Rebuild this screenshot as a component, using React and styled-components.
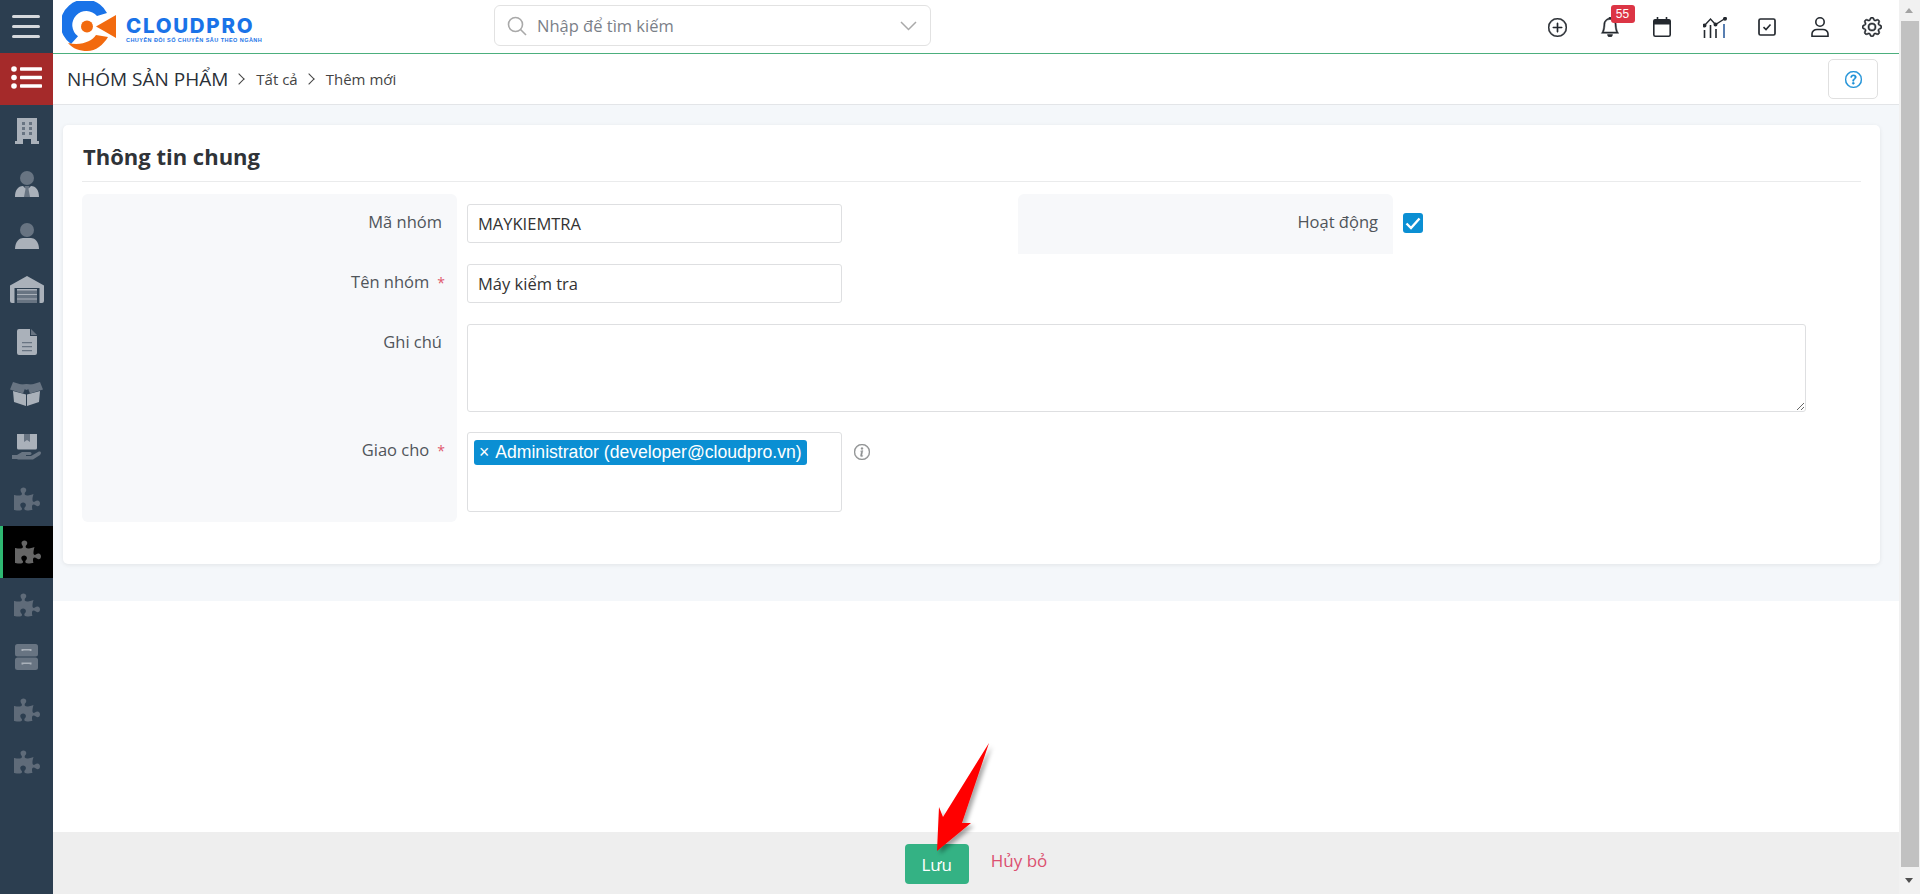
import React from "react";
import styled, { createGlobalStyle } from "styled-components";
import { FaPuzzlePiece } from "react-icons/fa";
import { BsPlusCircle, BsBell, BsGear, BsQuestionCircle, BsInfoCircle } from "react-icons/bs";

const LIGHT = "#aab1ba";
const DARK = "#687482";

const GlobalStyle = createGlobalStyle`
  html, body { margin: 0; height: 100%; overflow: hidden; }
  body { font-family: "Open Sans", "Noto Sans", sans-serif; color: #333; background: #fff; }
  * { box-sizing: border-box; }
`;

const BuildingIcon = () => (
  <svg width="24" height="26" viewBox="0 0 24 26">
    <path d="M2 0h20v23h2v3h-8v-5H8v5H0v-3h2z" fill={LIGHT} />
    {[4, 9, 14].map((y) => (
      <g key={y} fill={DARK}>
        <rect x="7" y={y} width="3" height="3" />
        <rect x="14" y={y} width="3" height="3" />
      </g>
    ))}
  </svg>
);

const TieIcon = () => (
  <svg width="24" height="26" viewBox="0 0 24 26">
    <circle cx="12" cy="7" r="7" fill={DARK} />
    <path d="M0 26c0-7 3-11 8-11l2 2h4l2-2c5 0 8 4 8 11z" fill={LIGHT} />
    <path d="M9.500 15h5l-1 3 1.500 8h-6l1.500-8z" fill={DARK} />
  </svg>
);

const UserIcon = () => (
  <svg width="24" height="26" viewBox="0 0 24 26">
    <circle cx="12" cy="7" r="7" fill={DARK} />
    <path d="M0 26c0-8 5-11 8-11h8c3 0 8 3 8 11z" fill={LIGHT} />
  </svg>
);

const WarehouseIcon = () => (
  <svg width="34" height="27" viewBox="0 0 34 27">
    <path d="M0 9.500 17 0l17 9.500V25a2 2 0 0 1-2 2h-2.500V12h-25v15H2a2 2 0 0 1-2-2z" fill={LIGHT} />
    <rect x="7" y="13" width="20" height="14" fill={LIGHT} />
    <rect x="7" y="14.500" width="20" height="3.500" fill={DARK} />
    <rect x="7" y="19" width="20" height="3.500" fill={DARK} />
    <rect x="7" y="23.500" width="20" height="3.500" fill={DARK} />
  </svg>
);

const FileIcon = () => (
  <svg width="20" height="26" viewBox="0 0 20 26">
    <path d="M2 0h11v7h7v17a2 2 0 0 1-2 2H2a2 2 0 0 1-2-2V2a2 2 0 0 1 2-2z" fill={LIGHT} />
    <path d="M14 0l6 6h-6z" fill={DARK} />
    <path d="M5 13h10v1.300H5zM5 17h10v1.300H5zM5 21h10v1.300H5z" fill={DARK} />
  </svg>
);

const BoxIcon = () => (
  <svg width="33" height="24" viewBox="0 0 33 24">
    <path d="M3 9l13 3.500V24L4 20z" fill={LIGHT} />
    <path d="M30 9l-13 3.500V24l12-4z" fill={LIGHT} />
    <path d="M3 0l13 4-3 7.500L0 7.500zM30 0L17 4l3 7.500 13-4z" fill={DARK} />
    <path d="M6 3l10.500-1L27 3l-10.500 5z" fill={DARK} />
  </svg>
);

const HandBoxIcon = () => (
  <svg width="30" height="26" viewBox="0 0 30 26">
    <path d="M5 0h20v14a1.500 1.500 0 0 1-1.500 1.500h-17A1.500 1.500 0 0 1 5 14z" fill={LIGHT} />
    <path d="M12 0h6v8l-3-2-3 2z" fill={DARK} />
    <path d="M0 21h5l5-3h8c2 0 2 3 0 3h-4v1h5l7-4c3-1.500 4 1 2 3l-7 4.500H6l-1-.5H0z" fill={DARK} />
  </svg>
);

const CabinetIcon = () => (
  <svg width="23" height="26" viewBox="0 0 23 26">
    <rect width="23" height="12.400" rx="2.500" fill={DARK} />
    <rect y="13.600" width="23" height="12.400" rx="2.500" fill={DARK} />
    <path d="M6.500 7V5h10v2h-1.800V6.500H8.300V7zM6.500 20.500v-2h10v2h-1.800V20H8.300v.5z" fill={LIGHT} />
  </svg>
);

const ListIcon = () => (
  <svg width="31" height="23" viewBox="0 0 31 23">
    <circle cx="3" cy="3" r="2.800" fill="#fff" />
    <circle cx="3" cy="11.500" r="2.800" fill="#fff" />
    <circle cx="3" cy="20" r="2.800" fill="#fff" />
    <rect x="9" y="1.300" width="22" height="3.400" rx="0.800" fill="#fff" />
    <rect x="9" y="9.800" width="22" height="3.400" rx="0.800" fill="#fff" />
    <rect x="9" y="18.300" width="22" height="3.400" rx="0.800" fill="#fff" />
  </svg>
);

const CalendarIcon = () => (
  <svg width="18" height="20" viewBox="0 0 18 20">
    <path d="M2 2.500h14A1.500 1.500 0 0 1 17.500 4v3.500H.5V4A1.500 1.500 0 0 1 2 2.500z" fill="#24292f" />
    <path d="M4.500 0v3M13.500 0v3" stroke="#24292f" strokeWidth="1.600" />
    <rect x="0.800" y="2.800" width="16.400" height="16.400" rx="1.500" fill="none" stroke="#24292f" strokeWidth="1.600" />
  </svg>
);

const ChartIcon = () => (
  <svg width="24" height="21" viewBox="0 0 24 21" fill="none" stroke="#24292f" strokeWidth="1.400">
    <path d="M1.500 8.500 7.500 2l5 5.500L22 1.500" />
    <path d="M1.500 13v8M7.500 8v13M13 12v9" strokeWidth="1.600" />
    <path d="M21 7v14" stroke="#2f5f9e" strokeWidth="1.600" />
    <circle cx="1.500" cy="8.500" r="1.300" fill="#24292f" />
    <circle cx="12.500" cy="7.500" r="1.300" fill="#24292f" />
    <circle cx="22" cy="1.700" r="1.300" fill="#24292f" />
  </svg>
);

const TaskIcon = () => (
  <svg width="18" height="18" viewBox="0 0 18 18" fill="none" stroke="#24292f">
    <rect x="1" y="1" width="16" height="16" rx="1.500" strokeWidth="1.700" />
    <path d="M5.500 9.200 8 11.500l4.500-5" strokeWidth="1.600" />
  </svg>
);

const PersonIcon = () => (
  <svg width="18" height="20" viewBox="0 0 18 20" fill="none" stroke="#24292f" strokeWidth="1.600">
    <circle cx="9" cy="5" r="4.200" />
    <path d="M1 19.200v-2.400c0-2.500 2.500-4.300 5-4.300h6c2.500 0 5 1.800 5 4.300v2.400z" />
  </svg>
);

const CheckMark = () => (
  <svg width="16" height="13" viewBox="0 0 16 13" fill="none" stroke="#fff" strokeWidth="2.400">
    <path d="M1.500 6.500l4.500 4.500 8.500-9.500" />
  </svg>
);

const Logo = () => (
  <svg width="54" height="51" viewBox="0 0 54 51">
    <path d="M45 12A24.500 24.500 0 1 0 9 43l7-7.700A14 14 0 1 1 35 15z" fill="#1a73e8" />
    <circle cx="25" cy="25.500" r="6" fill="#f26a0f" />
    <path d="M34 25.500 54 14v23l-12-7z" fill="#f26a0f" />
    <path d="M6 42c5 6 12 8 19 8 9 0 16-6 21-14l-12-2c-4 6-14 11-28 8z" fill="#f26a0f" />
  </svg>
);

const Arrow = () => (
  <ArrowLayer viewBox="0 0 64 120" width="64" height="120">
    <defs>
      <filter id="arrowShadow" x="-30%" y="-30%" width="170%" height="170%">
        <feDropShadow dx="3" dy="3" stdDeviation="2" floodColor="#000" floodOpacity="0.35" />
      </filter>
    </defs>
    <path d="M55 1 28 81h9L3 109 5 65l4 10z" fill="#ff0000" filter="url(#arrowShadow)" />
  </ArrowLayer>
);

function PuzzleIcon({ $active }) {
  return <PuzzleGlyph $active={$active} />;
}

const sideItems = [
  { icon: <BuildingIcon /> },
  { icon: <TieIcon /> },
  { icon: <UserIcon /> },
  { icon: <WarehouseIcon /> },
  { icon: <FileIcon /> },
  { icon: <BoxIcon /> },
  { icon: <HandBoxIcon /> },
  { icon: <PuzzleIcon /> },
  { icon: <PuzzleIcon $active />, active: true },
  { icon: <PuzzleIcon /> },
  { icon: <CabinetIcon /> },
  { icon: <PuzzleIcon /> },
  { icon: <PuzzleIcon /> },
];

function App() {
  return (
    <Page>
      <GlobalStyle />
      <Sidebar>
        <MenuToggle>
          <span />
          <span />
          <span />
        </MenuToggle>
        <ListButton>
          <ListIcon />
        </ListButton>
        {sideItems.map((item, index) => (
          <SideItem key={index} $active={item.active}>
            {item.icon}
          </SideItem>
        ))}
      </Sidebar>

      <Main>
        <Header>
          <LogoWrap>
            <Logo />
            <LogoText>
              <LogoName>CLOUDPRO</LogoName>
              <LogoSlogan>CHUYỂN ĐỔI SỐ CHUYÊN SÂU THEO NGÀNH</LogoSlogan>
            </LogoText>
          </LogoWrap>
          <SearchBox>
            <svg width="20" height="20" viewBox="0 0 20 20" fill="none" stroke="#a9a9a9" strokeWidth="1.600">
              <circle cx="8.500" cy="8.500" r="7" />
              <path d="M13.500 13.500 19 19" />
            </svg>
            <SearchText>Nhập để tìm kiếm</SearchText>
            <svg width="17" height="10" viewBox="0 0 17 10" fill="none" stroke="#a9a9a9" strokeWidth="1.500">
              <path d="M1 1l7.500 7.500L16 1" />
            </svg>
          </SearchBox>
          <HeaderIcons>
            <HeaderIcon><BsPlusCircle size={19} strokeWidth={0.4} stroke="currentColor" /></HeaderIcon>
            <HeaderIcon>
              <BsBell size={20} strokeWidth={0.4} stroke="currentColor" />
              <Badge>55</Badge>
            </HeaderIcon>
            <HeaderIcon><CalendarIcon /></HeaderIcon>
            <HeaderIcon><ChartIcon /></HeaderIcon>
            <HeaderIcon><TaskIcon /></HeaderIcon>
            <HeaderIcon><PersonIcon /></HeaderIcon>
            <HeaderIcon><BsGear size={20} strokeWidth={0.4} stroke="currentColor" /></HeaderIcon>
          </HeaderIcons>
        </Header>

        <Breadcrumb>
          <ModuleName>NHÓM SẢN PHẨM</ModuleName>
          <Chevron />
          <Crumb>Tất cả</Crumb>
          <Chevron />
          <Crumb>Thêm mới</Crumb>
          <HelpButton><BsQuestionCircle size={17} strokeWidth={0.4} stroke="currentColor" /></HelpButton>
        </Breadcrumb>

        <Content>
          <Card>
            <CardTitle>Thông tin chung</CardTitle>
            <FormGrid>
              <LabelCell $first>Mã nhóm</LabelCell>
              <FieldCell>
                <TextInput readOnly value="MAYKIEMTRA" />
              </FieldCell>
              <LabelCell $single>Hoạt động</LabelCell>
              <CheckCell>
                <CheckBox><CheckMark /></CheckBox>
              </CheckCell>

              <LabelCell>Tên nhóm<Required>*</Required></LabelCell>
              <FieldCell $span={3}>
                <TextInput readOnly value="Máy kiểm tra" />
              </FieldCell>

              <LabelCell>Ghi chú</LabelCell>
              <FieldCell $span={3}>
                <NoteArea readOnly />
              </FieldCell>

              <LabelCell $last>Giao cho<Required>*</Required></LabelCell>
              <AssignCell $span={3}>
                <OwnerBox>
                  <OwnerChip><ChipClose>×</ChipClose>Administrator (developer@cloudpro.vn)</OwnerChip>
                </OwnerBox>
                <InfoMark><BsInfoCircle size={16} strokeWidth={0.4} stroke="currentColor" /></InfoMark>
              </AssignCell>
            </FormGrid>
          </Card>
        </Content>

        <BlankArea />

        <Footer>
          <SaveButton>Lưu</SaveButton>
          <CancelLink>Hủy bỏ</CancelLink>
          <Arrow />
        </Footer>
      </Main>

      <ScrollBar>
        <ScrollArrow $up />
        <ScrollThumb />
        <ScrollArrow />
      </ScrollBar>
    </Page>
  );
}

export default App;

const Page = styled.div`
  display: flex;
  width: 1920px;
  height: 894px;
  overflow: hidden;
`;

const Sidebar = styled.nav`
  width: 53px;
  flex-shrink: 0;
  background: #2c3e50;
  display: flex;
  flex-direction: column;
`;

const MenuToggle = styled.div`
  height: 53px;
  display: flex;
  flex-direction: column;
  justify-content: center;
  gap: 6.500px;
  padding: 0 13px 0 12px;
  span {
    height: 3.500px;
    border-radius: 2px;
    background: #d5d8dc;
  }
`;

const ListButton = styled.div`
  height: 52px;
  padding-bottom: 4px;
  background: #a52a2a;
  display: flex;
  align-items: center;
  justify-content: center;
`;

const SideItem = styled.div`
  height: 52.600px;
  display: flex;
  align-items: center;
  justify-content: center;
  background: ${(props) => (props.$active ? "#000" : "transparent")};
  border-left: ${(props) => (props.$active ? "3px solid #2eb872" : "none")};
`;

const PuzzleGlyph = styled(FaPuzzlePiece)`
  width: 26px;
  height: 26px;
  color: ${(props) => (props.$active ? "#666" : "#5f6b79")};
`;

const Main = styled.div`
  flex: 1;
  min-width: 0;
  display: flex;
  flex-direction: column;
`;

const Header = styled.header`
  height: 54px;
  flex-shrink: 0;
  border-bottom: 1px solid #4caf7d;
  display: flex;
  align-items: flex-start;
  background: #fff;
`;

const LogoWrap = styled.div`
  width: 441px;
  flex-shrink: 0;
  display: flex;
  align-items: flex-start;
  padding: 1px 0 0 9px;
  gap: 10px;
`;

const LogoText = styled.div`
  display: flex;
  flex-direction: column;
  padding-top: 15px;
`;

const LogoName = styled.div`
  font-family: "Inter", "Liberation Sans", sans-serif;
  font-weight: 800;
  font-size: 20.500px;
  line-height: 20px;
  letter-spacing: 1.700px;
  color: #1a73e8;
`;

const LogoSlogan = styled.div`
  font-family: "Liberation Sans", sans-serif;
  font-weight: 700;
  font-size: 5.500px;
  line-height: 8px;
  letter-spacing: 0.450px;
  color: #1a73e8;
  white-space: nowrap;
`;

const SearchBox = styled.div`
  width: 437px;
  height: 41px;
  margin-top: 5px;
  border: 1px solid #e2e2e2;
  border-radius: 6px;
  display: flex;
  align-items: center;
  padding: 0 13px 0 12px;
`;

const SearchText = styled.span`
  flex: 1;
  margin-left: 10px;
  font-size: 16.500px;
  color: #7b8088;
`;

const HeaderIcons = styled.div`
  margin-left: auto;
  display: flex;
  padding-right: 0.500px;
`;

const HeaderIcon = styled.div`
  position: relative;
  width: 52.500px;
  height: 53px;
  padding-top: 1px;
  display: flex;
  align-items: center;
  justify-content: center;
  color: #24292f;
`;

const Badge = styled.span`
  position: absolute;
  top: 5px;
  left: 27px;
  width: 24px;
  height: 18px;
  border-radius: 3px;
  background: #dc3545;
  color: #fff;
  font-family: "Liberation Sans", sans-serif;
  font-size: 12px;
  line-height: 18px;
  text-align: center;
`;

const Breadcrumb = styled.div`
  height: 51px;
  flex-shrink: 0;
  display: flex;
  align-items: center;
  padding: 0 21px 0 14px;
  background: #fff;
  border-bottom: 1px solid #e3e5e8;
`;

const ModuleName = styled.span`
  font-size: 19px;
  font-weight: 500;
  color: #2a3038;
`;

const Chevron = styled.i`
  width: 8px;
  height: 8px;
  margin: 0 13px 0 7px;
  border-top: 1.500px solid #444;
  border-right: 1.500px solid #444;
  transform: rotate(45deg);
`;

const Crumb = styled.span`
  font-size: 15px;
  color: #444;
`;

const HelpButton = styled.div`
  margin-left: auto;
  width: 50px;
  height: 40px;
  border: 1px solid #e0e0e0;
  border-radius: 5px;
  display: flex;
  align-items: center;
  justify-content: center;
  color: #1b8fd6;
`;

const Content = styled.main`
  height: 496px;
  flex-shrink: 0;
  background: #f4f7fa;
  padding: 20px 19px 0 10px;
`;

const Card = styled.section`
  height: 439px;
  background: #fff;
  border-radius: 5px;
  box-shadow: 0 1px 4px rgba(0, 0, 0, 0.08);
  padding: 0 19px;
`;

const CardTitle = styled.h2`
  margin: 0;
  height: 57px;
  padding: 18px 0 0 1px;
  border-bottom: 1px solid #eaebec;
  font-size: 22px;
  line-height: 27px;
  font-weight: 700;
  color: #2f3338;
`;

const FormGrid = styled.div`
  margin-top: 12px;
  display: grid;
  grid-template-columns: 375px 561px 375px 1fr;
  grid-template-rows: 60px 60px 108px 100px;
`;

const LabelCell = styled.div`
  background: #f7f8fa;
  padding: 18px 15px 0 0;
  text-align: right;
  font-size: 16.500px;
  line-height: 20px;
  color: #50555a;
  border-radius: ${(props) =>
    props.$first || props.$single ? "6px 6px 0 0" : props.$last ? "0 0 6px 6px" : "0"};
`;

const Required = styled.span`
  margin-left: 8px;
  margin-right: -3px;
  color: #e0596e;
  font-size: 14px;
`;

const FieldCell = styled.div`
  grid-column: span ${(props) => props.$span || 1};
  padding: 10px 0 0 10px;
`;

const CheckCell = styled.div`
  padding: 19px 0 0 10px;
`;

const CheckBox = styled.div`
  width: 20px;
  height: 20px;
  border-radius: 3px;
  background: #0b8fd3;
  display: flex;
  align-items: center;
  justify-content: center;
`;

const TextInput = styled.input`
  display: block;
  width: 375px;
  height: 39px;
  border: 1px solid #dedfe1;
  border-radius: 3px;
  padding: 0 10px;
  font-family: "Open Sans", sans-serif;
  font-size: 16.500px;
  color: #333;
  outline: none;
`;

const NoteArea = styled.textarea`
  display: block;
  width: 1339px;
  height: 88px;
  border: 1px solid #dedfe1;
  border-radius: 3px;
  outline: none;
`;

const AssignCell = styled(FieldCell)`
  display: flex;
  align-items: flex-start;
`;

const OwnerBox = styled.div`
  width: 375px;
  height: 80px;
  border: 1px solid #dedfe1;
  border-radius: 3px;
  padding: 7px 6px;
`;

const OwnerChip = styled.span`
  display: inline-flex;
  align-items: center;
  height: 25px;
  padding: 0 5px 0 5px;
  border-radius: 3px;
  background: #0b8fd3;
  color: #fff;
  font-family: "Liberation Sans", sans-serif;
  font-size: 17.600px;
  white-space: nowrap;
`;

const ChipClose = styled.span`
  margin-right: 6px;
`;

const InfoMark = styled.span`
  margin: 12px 0 0 12px;
  color: #8d8f91;
  display: flex;
`;

const BlankArea = styled.div`
  flex: 1;
  background: #fff;
`;

const Footer = styled.footer`
  position: relative;
  height: 62px;
  flex-shrink: 0;
  background: #eeeeee;
  display: flex;
  justify-content: center;
  padding: 12px 0 0 0;
  gap: 22px;
`;

const SaveButton = styled.button`
  width: 64px;
  height: 40px;
  border: none;
  border-radius: 4px;
  background: #34b284;
  color: #fff;
  font-family: "Open Sans", sans-serif;
  font-size: 17px;
`;

const CancelLink = styled.a`
  font-size: 17px;
  line-height: 34px;
  color: #dc5070;
`;

const ArrowLayer = styled.svg`
  position: absolute;
  left: 881px;
  top: -90px;
  overflow: visible;
`;

const ScrollBar = styled.div`
  width: 21px;
  flex-shrink: 0;
  background: #f1f1f1;
  display: flex;
  flex-direction: column;
  align-items: center;
  padding: 0 1px 0 2px;
`;

const ScrollArrow = styled.div`
  height: ${(props) => (props.$up ? "21px" : "27px")};
  width: 100%;
  position: relative;
  &::after {
    content: "";
    position: absolute;
    left: 4px;
    top: ${(props) => (props.$up ? "8px" : "11px")};
    border-left: 4.500px solid transparent;
    border-right: 4.500px solid transparent;
    ${(props) =>
      props.$up ? "border-bottom: 5px solid #a3a3a3;" : "border-top: 5px solid #505050;"}
  }
`;

const ScrollThumb = styled.div`
  flex: 1;
  width: 100%;
  background: #c1c1c1;
`;
